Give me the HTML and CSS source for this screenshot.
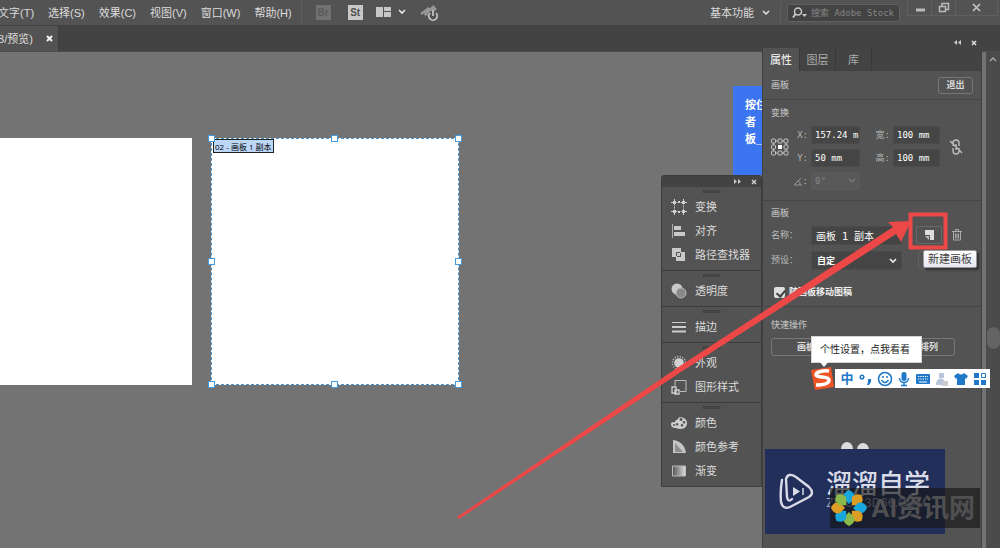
FILE: index.html
```html
<!DOCTYPE html>
<html lang="zh-CN">
<head>
<meta charset="utf-8">
<title>画板编辑</title>
<link rel="stylesheet" href="styles.css">
</head>
<body>
<div class="app">
  <header class="menubar">
    <nav class="menus">
      <button class="menu">文字(T)</button><button class="menu">选择(S)</button><button class="menu">效果(C)</button><button class="menu">视图(V)</button><button class="menu">窗口(W)</button><button class="menu">帮助(H)</button>
    </nav>
    <div class="tools">
      <button class="square off">Br</button>
      <button class="square">St</button>
      <button class="bare" aria-label="排列文档"><svg width="30" height="14" viewBox="0 0 30 14"><path fill="#c8c8c8" d="M0 1h7v10H0zM8 1h7v4H8zM8 6h7v5H8z"/><path d="M23 4l3 3 3-3" fill="none" stroke="#e8e8e8" stroke-width="1.600"/></svg></button>
      <button class="bare" aria-label="性能"><svg width="20" height="18" viewBox="0 0 20 18"><path d="M1 10L9 4 5 11 14 2 8 12 16 4" fill="none" stroke="#969696" stroke-width="2.500"/><circle cx="13" cy="12" r="5.500" fill="#535353"/><path d="M10 9a4.200 4.200 0 1 0 6 0M13 6v6" fill="none" stroke="#c8c8c8" stroke-width="1.700"/></svg></button>
    </div>
    <div class="right">
      <button class="workspace">基本功能 <svg width="8" height="6"><path d="M1 1l3 3 3-3" fill="none" stroke="#e4e4e4" stroke-width="1.500"/></svg></button>
      <label class="search"><svg width="16" height="12" viewBox="0 0 16 12"><circle cx="6" cy="4.500" r="3.500" fill="none" stroke="#c8c8c8" stroke-width="1.500"/><path d="M3.500 7L1 10.500" stroke="#c8c8c8" stroke-width="2"/><path d="M10 7h5l-2.500 3z" fill="#c8c8c8"/></svg><input aria-label="搜索" placeholder="搜索 Adobe Stock"></label>
      <div class="window-buttons">
        <button aria-label="最小化"><svg width="12" height="12"><path d="M2 8h9" stroke="#bbb" stroke-width="3"/></svg></button>
        <button aria-label="还原"><svg width="12" height="12"><path d="M4 4V1.500h6.500v6H8M1.500 4.500h6v5h-6z" fill="none" stroke="#bbb" stroke-width="1.500"/></svg></button>
        <button aria-label="关闭" class="close"><svg width="12" height="12"><path d="M2 2l7 7M9 2L2 9" stroke="#c2c2c2" stroke-width="1.700"/></svg></button>
      </div>
    </div>
  </header>
  <div class="doc-tabs"><div class="doc-tab"><span>B/预览)</span><button class="bare" aria-label="关闭文档"><svg width="7" height="7"><path d="M1 1l5 5M6 1L1 6" stroke="#f2f2f2" stroke-width="2"/></svg></button></div></div>
  <main class="canvas">
    <div class="artboard first"></div>
    <div class="artboard active">
      <span class="board-label">02 - 画板 1 副本</span>
      <i class="handle t l"></i><i class="handle t c"></i><i class="handle t r"></i>
      <i class="handle m l"></i><i class="handle m r"></i>
      <i class="handle b l"></i><i class="handle b c"></i><i class="handle b r"></i>
    </div>
    <div class="hint">按住<br>者<br>板_</div>
  </main>
  <div class="scrollbar"><svg width="8" height="6"><path d="M1 5l3-3 3 3" fill="none" stroke="#a5a5a5" stroke-width="1.500"/></svg><i class="thumb"></i></div>

  <aside class="dock">
    <div class="grip-bar"><svg width="7" height="5"><path d="M0 0l3 2.500L0 5zM4 0l3 2.500L4 5z" fill="#ccc"/></svg><svg width="6" height="6"><path d="M1 1l4 4M5 1L1 5" stroke="#ccc" stroke-width="1.500"/></svg></div>
    <div class="group">
      <button class="entry"><svg width="16" height="16"><path d="M3.500 3.500h9v9h-9z" fill="none" stroke="#bdbdbd" stroke-dasharray="2 1"/><path d="M2 2h3v3H2zM11 2h3v3h-3zM2 11h3v3H2zM11 11h3v3h-3zM3 0h1v2H3zM12 0h1v2h-1zM3 14h1v2H3zM12 14h1v2h-1zM0 3h2v1H0zM14 3h2v1h-2zM0 12h2v1H0zM14 12h2v1h-2zM7 2h2v2H7zM7 12h2v2H7z" fill="#cfcfcf"/></svg>变换</button>
      <button class="entry"><svg width="16" height="16"><path d="M1.500 1v14" stroke="#aaa"/><path d="M3 3h7v4H3zM3 9h11v4H3z" fill="#c9c9c9"/></svg>对齐</button>
      <button class="entry"><svg width="16" height="16"><path fill="#c9c9c9" fill-rule="evenodd" d="M1 1h9v4h4v9H5v-4H1zM5 5v4h1V6h3V5zM9 6v3H6v1h4V6z"/></svg>路径查找器</button>
    </div>
    <div class="group">
      <button class="entry"><svg width="16" height="16"><circle cx="6" cy="6" r="5.500" fill="#c9c9c9"/><circle cx="10" cy="10" r="5" fill="#888" stroke="#bbb"/></svg>透明度</button>
    </div>
    <div class="group">
      <button class="entry"><svg width="16" height="16"><path d="M1 3.500h14" stroke="#ccc"/><path d="M1 8h14" stroke="#ccc" stroke-width="2"/><path d="M1 12.500h14" stroke="#ccc" stroke-width="2"/></svg>描边</button>
    </div>
    <div class="group">
      <button class="entry"><svg width="16" height="16"><circle cx="8" cy="8" r="4.800" fill="#d2d2d2"/><circle cx="8" cy="8" r="6.500" fill="none" stroke="#bbb" stroke-width="1.500" stroke-dasharray="1.200 1.350"/></svg>外观</button>
      <button class="entry"><svg width="16" height="16"><path d="M4 7V1.500h11v11H9" fill="none" stroke="#bdbdbd"/><path d="M1 8h4v6H1zM4 11h4v4H4z" fill="#555" stroke="#d0d0d0" stroke-width="1.300"/></svg>图形样式</button>
    </div>
    <div class="group">
      <button class="entry"><svg width="16" height="16"><path fill="#cecece" fill-rule="evenodd" d="M7 4c0-3 9-2 9 4s-6 7-11 5C1 13 0 11 0 9c0-3 4-1 4-2s1-2 3-3zM10 3a1.500 1.500 0 1 0 .1 0zM13 6a1.300 1.300 0 1 0 .1 0zM6 8a1.300 1.300 0 1 0 .1 0zM11 9a1.300 1.300 0 1 0 .1 0zM3 9a1 1 0 1 0 .1 0z"/></svg>颜色</button>
      <button class="entry"><svg width="16" height="16"><defs><linearGradient id="shade"><stop stop-color="#555"/><stop offset="1" stop-color="#ddd"/></linearGradient></defs><path d="M2 1c8 1 12 6 13 13H2z" fill="#c5c5c5"/><path d="M4 4l8 9H4z" fill="#8e8e8e"/></svg>颜色参考</button>
      <button class="entry"><svg width="16" height="16"><path d="M1.500 3h13v10h-13z" fill="url(#shade)" stroke="#bbb"/></svg>渐变</button>
    </div>
  </aside>

  <aside class="panel">
    <div class="grip-bar"><svg width="7" height="5"><path d="M3 0L0 2.500 3 5zM7 0L4 2.500 7 5z" fill="#ccc"/></svg><svg width="6" height="6"><path d="M1 1l4 4M5 1L1 5" stroke="#ddd" stroke-width="1.500"/></svg></div>
    <div class="tabs"><button class="tab on">属性</button><button class="tab">图层</button><button class="tab">库</button></div>
    <section class="head"><h2>画板</h2><button class="outline">退出</button></section>
    <section class="transform">
      <h2>变换</h2>
      <div class="fields">
        <svg class="ref" width="18" height="18" viewBox="0 0 18 18"><g fill="none" stroke="#c4c4c4"><rect x=".5" y="1" width="4" height="4" rx="1"/><rect x="7" y="1" width="4" height="4" rx="1"/><rect x="13" y="1" width="4" height="4" rx="1"/><rect x=".5" y="7" width="4" height="4" rx="1"/><rect x="13" y="7" width="4" height="4" rx="1"/><rect x=".5" y="13" width="4" height="4" rx="1"/><rect x="7" y="13" width="4" height="4" rx="1"/><rect x="13" y="13" width="4" height="4" rx="1"/><path d="M5 3h2M11 3h2M5 15h2M11 15h2M2.500 5v2M2.500 11v2M15 5v2M15 11v2"/></g><path d="M7 7h4v4H7z" fill="#fff"/></svg>
        <label for="x">X:</label><input id="x" value="157.24 m"><label for="w">宽:</label><input id="w" value="100 mm">
        <svg class="chain" width="16" height="18" viewBox="0 0 16 18"><path d="M5 8V5a3 3 0 0 1 6 0v3M5 10v3a3 3 0 0 0 6 0v-3M8 6v6M2 3l12 12" fill="none" stroke="#bdbdbd" stroke-width="1.400"/></svg>
        <label for="y">Y:</label><input id="y" value="50 mm"><label for="h">高:</label><input id="h" value="100 mm">
        <label for="angle" class="dim" aria-label="角度"><svg width="10" height="9"><path d="M8 1L1 8h8M5 4q3 1 2 4" fill="none" stroke="#929292"/></svg>:</label>
        <span class="pick dim"><select id="angle" disabled><option>0°</option></select><svg width="8" height="6"><path d="M1 1l3 3 3-3" fill="none" stroke="#777" stroke-width="1.500"/></svg></span>
      </div>
    </section>
    <section class="board">
      <h2>画板</h2>
      <div class="row"><label for="name">名称：</label><input id="name" class="name" value="画板 1 副本"><button class="new" aria-label="新建画板"><svg width="12" height="12"><path d="M2 1h9v10H7V6H2z" fill="#ddd"/><path d="M2 7h4v4z" fill="#bbb"/></svg></button><button class="bare trash" aria-label="删除画板"><svg width="10" height="12"><path d="M0 2.500h10M3.500 2V.5h3V2M1.500 3v8h7V3M3.500 4.500v5M5 4.500v5M6.500 4.500v5" fill="none" stroke="#aaa"/></svg></button></div>
      <div class="row preset"><label for="preset">预设：</label><span class="pick"><select id="preset"><option>自定</option></select><svg width="8" height="6"><path d="M1 1l3 3 3-3" fill="none" stroke="#eee" stroke-width="1.600"/></svg></span><button class="orient" aria-label="纵向"></button></div>
      <label class="check"><input type="checkbox" checked>随画板移动图稿</label>
    </section>
    <section class="quick"><h2>快速操作</h2><button class="outline wide"><span>画板</span><span>排列</span></button></section>
  </aside>

  <svg class="callout" width="510" height="320" viewBox="455 205 510 320"><path d="M457 517L683 364 893 227 888 222 911 221 901 242 896 234 684 370 459 519z" fill="#ec4848"/><path d="M910.500 214.500h35v33h-35z" fill="none" stroke="#ec4848" stroke-width="4"/></svg>
  <div class="tooltip" role="tooltip">新建画板</div>
  <div class="ime-tip">个性设置，点我看看</div>
  <div class="ime">
    <svg width="25" height="25" viewBox="0 0 25 25"><path d="M1 4l20-3 3 20-19 3z" fill="#ee5426"/><path d="M19 5C13 4 6 6 6 9s13 1 13 5-7 5-13 5" fill="none" stroke="#fff" stroke-width="3.500"/></svg>
    <div class="ime-icons">
      <b>中</b>
      <svg width="16" height="16"><circle cx="4" cy="6" r="1.800" fill="none" stroke="#1f78c8" stroke-width="1.500"/><path d="M10 8h3v3l-2 3H9l1-3z" fill="#1f78c8"/></svg>
      <svg width="16" height="16"><circle cx="8" cy="8" r="6.500" fill="none" stroke="#1f78c8" stroke-width="1.600"/><path d="M6 5v2M10 5v2M4.500 9q3.500 5 7 0" fill="none" stroke="#1f78c8" stroke-width="1.500"/></svg>
      <svg width="16" height="16"><rect x="5.500" y="1" width="5" height="9" rx="2.500" fill="#1f78c8"/><path d="M3.500 7c0 6 9 6 9 0M8 11v4M5 14.500h6" fill="none" stroke="#1f78c8" stroke-width="1.500"/></svg>
      <svg width="16" height="16"><rect x="1" y="3" width="14" height="10" rx="1" fill="#1f78c8"/><path d="M3 5.500h10M3 8h10" stroke="#fff" stroke-width="1.200" stroke-dasharray="1.300 1"/><path d="M4 11h8" stroke="#fff"/></svg>
      <svg width="16" height="16"><path d="M5 2h5v5H5zM2 14c0-8 8-8 9-3v3z" fill="#b9c5d8"/><path d="M8 10h6v5H8z" fill="#c9ccd3"/></svg>
      <svg width="16" height="16"><path d="M5 2q3 3 6 0l4 3-2 3-1-1v7H4V7L3 8 1 5z" fill="#1f78c8"/></svg>
      <svg width="16" height="16"><path d="M2 2h5v5H2zM2 9h5v5H2zM9 9h5v5H9z" fill="#1f78c8"/><path d="M9.500 2.500h4v4h-4z" fill="none" stroke="#1f78c8"/></svg>
    </div>
  </div>

  <div class="brand">
    <svg class="bumps" width="34" height="12"><ellipse cx="7" cy="8" rx="6" ry="7" fill="#ddd"/><ellipse cx="23" cy="9" rx="6" ry="7" fill="#ddd"/></svg>
    <svg width="36" height="38" viewBox="0 0 36 38"><g fill="none" stroke="#d9dce7" stroke-width="2.400" stroke-linecap="round"><path d="M3 7Q1 18 2 29q2 8 9 5L30 24q6-4 0-10L17 4Q9-1 7 6l1 18q1 6 5 2"/></g><path d="M14 14l7 4.500-7 4.500z" fill="#d9dce7"/><path d="M24 15v7" stroke="#d9dce7" stroke-width="1.500"/></svg>
    <div class="brand-text"><strong>溜溜自学</strong><span>ZIXUE.3D66.COM</span></div>
  </div>
  <div class="site">
    <svg width="38" height="38" viewBox="-19 -19 38 38"><defs><path id="petal" d="M0-4L-5-9Q-7-15 0-18Q7-15 5-9z"/></defs><use href="#petal" fill="#18a7dc"/><use href="#petal" fill="#dd9c24" transform="rotate(45)"/><use href="#petal" fill="#18a7dc" transform="rotate(90)"/><use href="#petal" fill="#dd9c24" transform="rotate(135)"/><use href="#petal" fill="#8bb84b" transform="rotate(180)"/><use href="#petal" fill="#18a7dc" transform="rotate(225)"/><use href="#petal" fill="#dd9c24" transform="rotate(270)"/><use href="#petal" fill="#8bb84b" transform="rotate(315)"/></svg>
    <span>AI资讯网</span>
  </div>
</div>
</body>
</html>
```
FILE: styles.css
```css
* { box-sizing: border-box; }
body { margin: 0; font: 11px/16px "Liberation Sans", "Noto Sans CJK SC", sans-serif; color: #dcdcdc; }
button, input, select { font: inherit; color: inherit; background: none; border: 0; margin: 0; padding: 0; }
svg { flex: none; display: block; }
.app { position: relative; height: 100vh; display: flex; flex-direction: column; overflow: hidden; background: #737373; }

.menubar { display: flex; justify-content: space-between; height: 26px; flex: none; background: #535353; border-bottom: 1px solid #414141; }
.menus { display: flex; align-items: center; gap: 14px; padding-right: 9px; border-right: 1px solid #606060; }
.menu { white-space: nowrap; }
.menu:first-child { margin-left: -2px; }
.tools { display: flex; align-items: center; gap: 15px; padding-left: 14px; margin-right: auto; }
.square { width: 15px; height: 15px; line-height: 15px; background: #c8c8c8; color: #505050; font-size: 10px; font-weight: bold; text-align: center; margin-right: 2px; }
.square.off { background: #727272; color: #5b5b5b; }
.tools .bare + .bare { margin-left: -1px; }
.square + .bare { margin-left: -4px; }
.bare { display: flex; }
.right { display: flex; align-items: center; }
.workspace { display: flex; align-items: center; gap: 8px; padding-right: 10px; margin-right: 6px; border-right: 1px solid #5f5f5f; height: 22px; }
.search { display: flex; align-items: center; gap: 3px; height: 18px; width: 113px; padding-left: 4px; background: #434343; border: 1px solid #606060; border-radius: 3px; }
.search input { width: 88px; font: 9px/14px "DejaVu Sans Mono", "Noto Sans CJK SC", monospace; }
.search input::placeholder { color: #858585; opacity: 1; }
.window-buttons { display: flex; margin-left: 7px; align-self: flex-start; border: 1px solid #606060; border-top: 0; margin-right: 2px; }
.window-buttons button { width: 24px; height: 15px; display: grid; place-items: center; border-right: 1px solid #606060; }
.window-buttons .close { width: 41px; border: 0; }

.doc-tabs { height: 26px; flex: none; background: #434343; border-bottom: 1px solid #4d4d4d; display: flex; }
.doc-tab { display: flex; align-items: center; gap: 13px; width: 59px; justify-content: flex-end; padding-right: 5px; background: #535353; border-right: 1px solid #3d3d3d; white-space: nowrap; }

.canvas { flex: 1; position: relative; }
.artboard { position: absolute; background: #fff; top: 86px; height: 247px; }
.first { left: 0; width: 192px; }
.active { left: 211px; width: 248px; border: 1px dashed #4a94d0; }
.board-label { display: inline-block; margin: 0 0 0 1px; padding: 0 1px; height: 14px; border: 1px solid #222; background: #bcd7f7; color: #000; font: 8px/14px "Open Sans", "Noto Sans CJK SC", sans-serif; white-space: nowrap; vertical-align: top; }
.handle { position: absolute; width: 7px; height: 7px; background: #fff; border: 1px solid #459be0; }
.t { top: -4px; } .m { top: 119px; } .b { bottom: -4px; }
.l { left: -4px; } .c { left: 119px; } .r { right: -4px; }
.hint { position: absolute; right: 238px; top: 34px; width: 29px; height: 89px; padding: 11px 0 0 12px; background: #3b75ef; color: #fff; font-weight: bold; line-height: 17px; overflow: hidden; white-space: nowrap; }
.scrollbar { position: absolute; right: 0; top: 52px; bottom: 0; width: 14px; background: #4b4b4b; padding: 4px 3px; }
.thumb { position: absolute; right: 0; top: 275px; width: 13px; height: 22px; border-radius: 7px; background: #646464; }

.grip-bar { display: flex; justify-content: flex-end; align-items: center; gap: 10px; height: 11px; padding-right: 4px; background: #434343; }
.dock { position: absolute; right: 238px; top: 175px; width: 101px; background: #535353; border: 1px solid #3c3c3c; border-radius: 3px 3px 0 0; }
.group { padding: 8px 8px 3px; border-bottom: 1px solid #3d3d3d; background: repeating-linear-gradient(90deg, #3e3e3e 0 1px, #4b4b4b 1px 2px) 41px 3px / 18px 3px no-repeat; }
.group:last-child { border: 0; }
.entry { display: flex; align-items: center; gap: 8px; height: 24px; width: 100%; white-space: nowrap; padding-left: 1px; }

.panel { position: absolute; right: 18px; top: 36px; bottom: 0; width: 220px; background: #535353; border: 1px solid #404040; border-bottom: 0; font-size: 9px; }
.tabs { display: flex; background: #434343; height: 23px; }
.tab { width: 36px; font-size: 11px; color: #aaa; border-right: 1px solid #393939; }
.tab.on { background: #535353; color: #fff; width: 37px; }
h2 { margin: 0; font-size: 9px; line-height: 14px; font-weight: 500; color: #bbb; }
.panel section { padding: 0 8px; border-bottom: 1px solid #474747; }
.panel .head { display: flex; justify-content: space-between; align-items: center; height: 29px; }
.outline { border: 1px solid #777; border-radius: 3px; height: 17px; width: 35px; font-size: 9px; font-weight: bold; line-height: 14px; }
.panel .transform { height: 101px; padding-top: 6px; }
.fields { display: grid; grid-template-columns: 17px 17px 49px 27px 47px 26px; grid-template-rows: repeat(3, 18px); gap: 5px 3px; margin-top: 6px; align-items: center; }
.fields label { text-align: right; color: #b6b6b6; font-family: "DejaVu Sans Mono", "Noto Sans CJK SC", monospace; }
.fields label.dim { grid-column: 2; display: flex; justify-content: flex-end; align-items: center; }
.fields input, .fields select { width: 100%; height: 18px; font: 9px/16px "DejaVu Sans Mono", "Noto Sans CJK SC", monospace; color: #fff; padding-left: 3px; background: #454545; border: 1px solid #4b4b4b; border-radius: 2px; }
.ref { grid-area: 1 / 1 / 3 / 2; }
.chain { grid-area: 1 / 6 / 3 / 7; justify-self: center; }
.pick { position: relative; display: block; }
.pick select { appearance: none; width: 100%; height: 18px; padding-left: 5px; }
.pick svg { position: absolute; right: 4px; top: 6px; pointer-events: none; }
.pick.dim select { background: #595959; border-color: #5b5b5b; color: #858585; opacity: 1; padding-left: 3px; }
.panel .board { padding-top: 5px; height: 106px; }
.row { display: flex; align-items: center; height: 20px; margin-top: 5px; }
.row label { width: 40px; color: #bbb; }
.name, .row .pick { width: 91px; height: 19px; background: #454545; border: 1px solid #4b4b4b; border-radius: 2px; }
.name { padding-left: 4px; font: 10px/17px "DejaVu Sans Mono", "Noto Sans CJK SC", monospace; color: #fff; }
.row .pick select { font-weight: bold; color: #fff; }
.new { margin-left: 14px; width: 26px; height: 18px; border: 1px solid #686868; border-radius: 2px; display: grid; place-items: center; }
.orient { margin-left: 16px; width: 26px; height: 18px; border: 1px solid #606060; border-radius: 2px; }
.trash { margin-left: 10px; }
.check { display: flex; align-items: center; gap: 4px; margin-top: 14px; font-weight: bold; color: #eee; }
.check input { appearance: none; width: 11px; height: 11px; margin-left: 3px; border-radius: 2px; background: #dedede; position: relative; }
.check input:checked::after { content: ""; position: absolute; left: 4px; top: 1px; width: 4px; height: 7px; border: solid #444; border-width: 0 2px 2px 0; transform: rotate(40deg); }
.panel .quick { padding-top: 11px; border: 0; }
.wide { display: flex; justify-content: space-between; align-items: center; width: 184px; height: 18px; margin-top: 6px; padding: 0 16px 0 25px; }

.callout { position: absolute; right: 35px; top: 205px; pointer-events: none; }
.tooltip { position: absolute; right: 23px; top: 250px; padding: 0 4px; border: 1px solid #999; border-radius: 2px; background: linear-gradient(#fff, #e6e7f2); color: #444; box-shadow: 2px 2px 2px #333; }
.ime-tip { position: absolute; right: 78px; top: 336px; padding: 5px 0 4px 8px; width: 111px; background: #fff; color: #222; font-size: 10px; white-space: nowrap; border: 1px solid #d4d4d4; }
.ime-tip::after { content: ""; position: absolute; left: 7px; top: 24px; border: solid transparent; border-width: 6px 5px 0; border-top-color: #fff; }
.ime { position: absolute; right: 10px; top: 366px; display: flex; align-items: center; }
.ime-icons { display: flex; align-items: center; gap: 3px; height: 19px; background: #fff; padding: 0 2px 0 4px; }
.ime b { width: 16px; font-size: 13px; line-height: 18px; text-align: center; color: #1f78c8; }
.brand { position: absolute; right: 55px; top: 449px; width: 180px; height: 85px; display: flex; align-items: center; gap: 11px; padding-left: 14px; background: #212f5a; color: #d9dce7; }
.bumps { position: absolute; left: 75px; top: -8px; height: 8px; }
.brand-text { display: flex; flex-direction: column; padding-bottom: 5px; }
.brand strong { font: 500 26px/28px "Noto Sans CJK SC", sans-serif; white-space: nowrap; }
.brand-text span { font: 12px/14px Inter, sans-serif; color: #9da3b6; }
.site { position: absolute; right: 20px; top: 488px; width: 150px; height: 40px; display: flex; align-items: center; gap: 3px; background: rgba(20, 20, 20, .64); color: #505053; }
.site span { font: bold 26px/36px "Liberation Sans", "Noto Sans CJK SC", sans-serif; white-space: nowrap; }
```
